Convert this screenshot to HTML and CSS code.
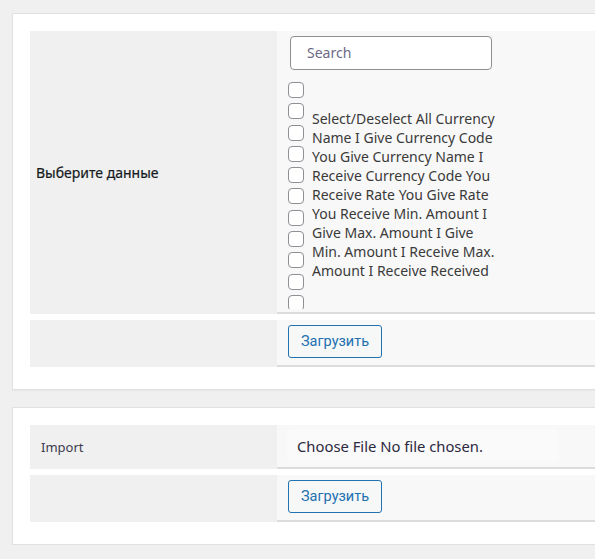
FILE: index.html
```html
<!DOCTYPE html>
<html lang="ru">
<head>
<meta charset="utf-8">
<title>Export / Import</title>
<link rel="stylesheet" href="styles.css">
</head>
<body>
<div class="card card-export">
  <div class="row row-tall">
    <div class="label"><span class="label-text strong">Выберите данные</span></div>
    <div class="value">
      <div class="search">Search</div>
      <div class="list">
        <div class="boxes">
          <span class="box"></span><span class="box"></span><span class="box"></span><span class="box"></span>
          <span class="box"></span><span class="box"></span><span class="box"></span><span class="box"></span>
          <span class="box"></span><span class="box"></span><span class="box"></span>
        </div>
        <p class="names">Select/Deselect All Currency Name I Give Currency Code You Give Currency Name I Receive Currency Code You Receive Rate You Give Rate You Receive Min. Amount I Give Max. Amount I Give Min. Amount I Receive Max. Amount I Receive Received</p>
      </div>
    </div>
  </div>
  <div class="row row-btn">
    <div class="label"></div>
    <div class="value"><button class="btn">Загрузить</button></div>
  </div>
</div>
<div class="card card-import">
  <div class="row row-file">
    <div class="label"><span class="label-text small">Import</span></div>
    <div class="value"><div class="file">Choose File No file chosen.</div></div>
  </div>
  <div class="row row-btn">
    <div class="label"></div>
    <div class="value"><button class="btn">Загрузить</button></div>
  </div>
</div>
</body>
</html>
```
FILE: styles.css
```css
html, body {
  overflow: hidden;
}
body {
  margin: 0;
  padding: 13px 0 0 12px;
  background: #f0f0f1;
  font-family: "Noto Sans", "Open Sans", sans-serif;
  color: #1d2327;
}
.card {
  background: #fff;
  border: 1px solid #e1e1e3;
  border-right: none;
  padding: 17px 0 22px 17px;
  box-shadow: 0 1px 1px rgba(0,0,0,0.03);
}
.card-import {
  margin-top: 17px;
}
.row {
  display: flex;
}
.row + .row {
  margin-top: 6px;
}
.label {
  width: 247px;
  flex: none;
  background: #f0f0f0;
  display: flex;
  align-items: center;
}
.label-text {
  padding-left: 6px;
}
.strong {
  font-size: 14px;
  font-weight: 400;
  color: #151a20;
  -webkit-text-stroke: 0.2px #151a20;
}
.small {
  font-size: 13px;
  padding-left: 11px;
  color: #3c3a4e;
}
.value {
  flex: 1;
  min-width: 0;
  background: #f8f8f8;
  border-bottom: 2px solid #dcdcdc;
  padding: 5px 11px 0;
}
.row-tall .value {
  height: 276px;
  padding-top: 5px;
}
.search {
  box-sizing: border-box;
  width: 202px;
  height: 34px;
  margin-left: 2px;
  border: 1px solid #8c8f94;
  border-radius: 4px;
  background: #fff;
  font-size: 14px;
  color: #6c6a86;
  line-height: 32px;
  padding-left: 16px;
}
.list {
  display: flex;
  height: 228px;
  overflow: hidden;
  margin-top: 11px;
}
.boxes {
  display: flex;
  flex-direction: column;
  gap: 5.3px;
  padding-top: 1px;
}
.box {
  display: block;
  box-sizing: border-box;
  width: 16px;
  height: 16px;
  border: 1px solid #8c8f94;
  border-radius: 4px;
  background: #fff;
  flex: none;
}
.names {
  margin: 28px 0 0 8px;
  width: 190px;
  font-size: 14px;
  line-height: 19px;
  color: #3a3a3a;
}
.row-btn .value {
  height: 40px;
}
.btn {
  box-sizing: border-box;
  height: 33px;
  padding: 0 12px;
  border: 1px solid #2271b1;
  border-radius: 3px;
  background: #f6f7f7;
  color: #2271b1;
  font-family: Roboto, "Liberation Sans", sans-serif;
  font-size: 14.5px;
  cursor: pointer;
}
.row-file .value {
  height: 42px;
  padding: 0 0 0 10px;
  display: flex;
  align-items: center;
}
.file {
  font-size: 14.8px;
  color: #2c2940;
  padding: 7px 10px;
  border-radius: 6px;
  background: #fafafa;
  width: 252px;
}
```
